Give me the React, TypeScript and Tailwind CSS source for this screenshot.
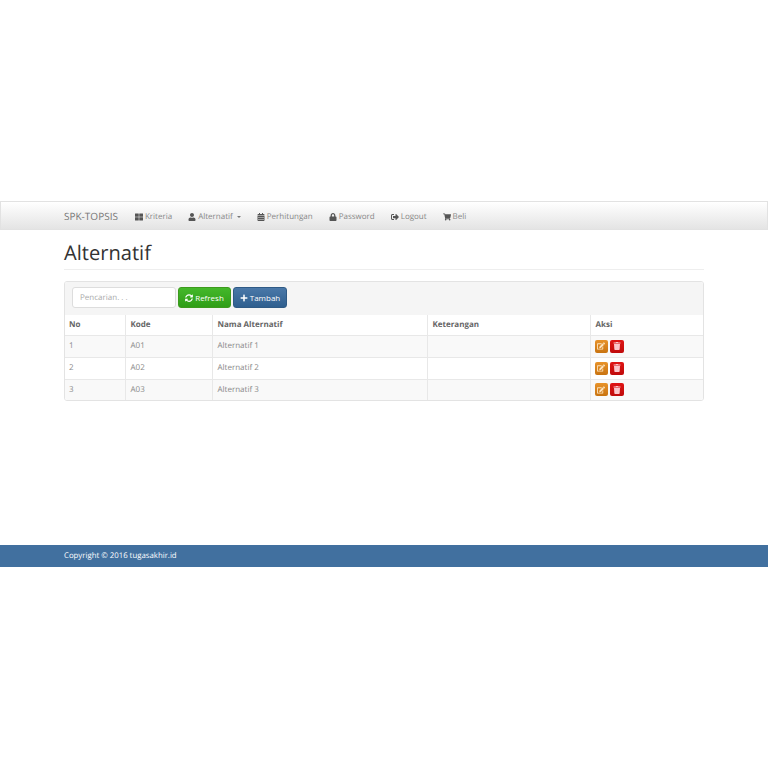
import { FaThLarge, FaUser, FaCalendarAlt, FaLock, FaSignOutAlt, FaShoppingCart, FaSyncAlt, FaPlus, FaEdit, FaTrash } from 'react-icons/fa';

const navItems = [
  { label: 'Kriteria', icon: FaThLarge },
  { label: 'Alternatif', icon: FaUser, caret: true },
  { label: 'Perhitungan', icon: FaCalendarAlt },
  { label: 'Password', icon: FaLock },
  { label: 'Logout', icon: FaSignOutAlt },
  { label: 'Beli', icon: FaShoppingCart },
];

const rows = [
  { no: 1, kode: 'A01', nama: 'Alternatif 1' },
  { no: 2, kode: 'A02', nama: 'Alternatif 2' },
  { no: 3, kode: 'A03', nama: 'Alternatif 3' },
];

function Navbar() {
  return (
    <nav className="h-[29px] border border-[#e2e2e2] bg-gradient-to-b from-white to-[#e4e4e4]">
      <div className="mx-auto flex h-full w-[640px] items-center pt-[2px]">
        <span className="mr-[17px] text-[10px] text-[#777]">SPK-TOPSIS</span>
        <div className="flex items-center gap-[16px]">
          {navItems.map((item) => (
            <span key={item.label} className="flex items-center gap-[2px] text-[8px] text-[#888]">
              <item.icon className="h-[8px] w-[8px] text-[#555]" />
              {item.label}
              {item.caret && <span className="ml-[2px] h-0 w-0 border-x-[2px] border-t-[2px] border-x-transparent border-t-[#777]" />}
            </span>
          ))}
        </div>
      </div>
    </nav>
  );
}

function Toolbar() {
  return (
    <div className="flex h-[33px] items-start gap-[2px] bg-[#f5f5f5] pl-[7px] pt-[5px]">
      <div className="flex h-[21px] w-[104px] items-center rounded-[3px] border border-[#ddd] bg-white pl-[7px] text-[8px] text-[#aaa]">
        Pencarian. . .
      </div>
      <button className="flex h-[21px] w-[53px] items-center justify-center gap-[2px] rounded-[3px] border border-[#3d9a1d] bg-gradient-to-b from-[#44b82a] to-[#2f9e17] text-[8px] text-white">
        <FaSyncAlt className="h-[8px] w-[8px]" />
        Refresh
      </button>
      <button className="flex h-[21px] w-[54px] items-center justify-center gap-[2px] rounded-[3px] border border-[#2f5a85] bg-gradient-to-b from-[#4a78a8] to-[#2f5f8f] text-[8px] text-white">
        <FaPlus className="h-[8px] w-[8px]" />
        Tambah
      </button>
    </div>
  );
}

function DataTable() {
  return (
    <table className="w-full table-fixed border-collapse text-left text-[8px] text-[#888]">
      <colgroup>
        <col className="w-[60px]" />
        <col className="w-[87px]" />
        <col className="w-[215px]" />
        <col className="w-[163px]" />
        <col />
      </colgroup>
      <thead>
        <tr className="h-[20px] font-bold text-[#666]">
          <th className="pl-[4px]">No</th>
          <th className="border-l border-[#e8e8e8] pl-[5px]">Kode</th>
          <th className="border-l border-[#e8e8e8] pl-[5px]">Nama Alternatif</th>
          <th className="border-l border-[#e8e8e8] pl-[5px]">Keterangan</th>
          <th className="border-l border-[#e8e8e8] pl-[5px]">Aksi</th>
        </tr>
      </thead>
      <tbody>
        {rows.map((row) => (
          <tr key={row.no} className="h-[22px] border-t border-[#e8e8e8] odd:bg-[#f9f9f9] last:h-[21px]">
            <td className="pl-[4px]">{row.no}</td>
            <td className="border-l border-[#e8e8e8] pl-[5px]">{row.kode}</td>
            <td className="border-l border-[#e8e8e8] pl-[5px]">{row.nama}</td>
            <td className="border-l border-[#e8e8e8] pl-[5px]"></td>
            <td className="border-l border-[#e8e8e8] pl-[4px]">
              <div className="flex gap-[2px]">
                <span className="flex h-[13px] w-[13.5px] items-center justify-center rounded-[2px] bg-gradient-to-b from-[#e8932a] to-[#c8730f] text-[#fde3bd]">
                  <FaEdit className="h-[8px] w-[8px]" />
                </span>
                <span className="flex h-[13px] w-[13.5px] items-center justify-center rounded-[2px] bg-gradient-to-b from-[#e01515] to-[#bf0a0a] text-[#fbc6cb]">
                  <FaTrash className="h-[8px] w-[8px]" />
                </span>
              </div>
            </td>
          </tr>
        ))}
      </tbody>
    </table>
  );
}

export default function App() {
  return (
    <div className="flex min-h-[768px] flex-col bg-white pt-[201px] font-['Open_Sans',sans-serif] [text-rendering:geometricPrecision]">
      <Navbar />
      <main className="mx-auto h-[315px] w-[640px]">
        <div className="mt-[8px] border-b border-[#eee] pb-[1px] text-[20.1px] leading-[30px] text-[#333]">Alternatif</div>
        <div className="mt-[11px] overflow-hidden rounded-[3px] border border-[#e3e3e3]">
          <Toolbar />
          <DataTable />
        </div>
      </main>
      <footer className="h-[22px] bg-[#41709f]">
        <div className="mx-auto flex h-full w-[640px] items-center pt-[1px] text-[7.8px] text-white">Copyright © 2016 tugasakhir.id</div>
      </footer>
    </div>
  );
}
